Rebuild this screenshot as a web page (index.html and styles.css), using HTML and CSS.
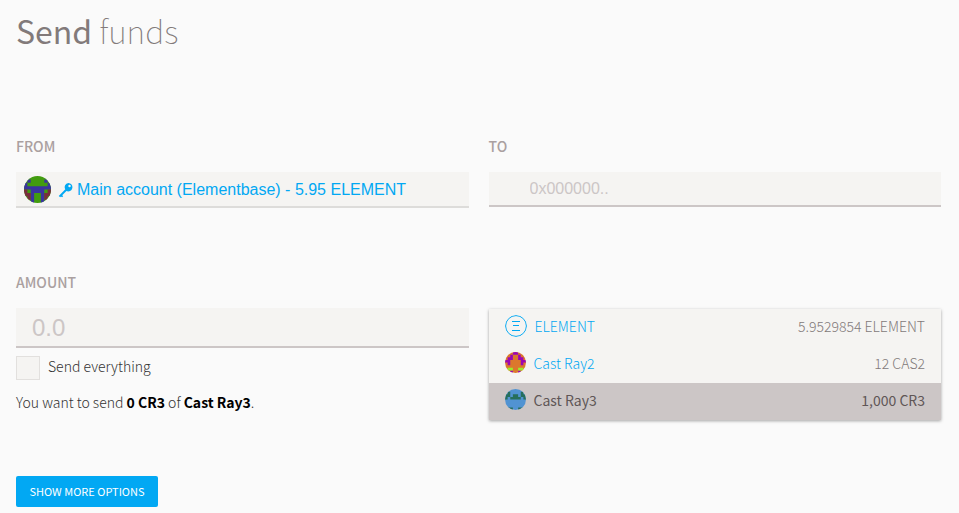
FILE: index.html
```
<!DOCTYPE html>
<html lang="en">
<head>
<meta charset="utf-8">
<title>Send funds</title>
<link rel="stylesheet" href="styles.css">
</head>
<body>
<main class="page">
  <h1 class="title"><strong>Send</strong> funds</h1>
  <form class="form">
    <section class="field">
      <h2 class="label" id="from-label">From</h2>
      <button type="button" class="account" aria-labelledby="from-label from-value">
        <svg class="avatar" viewBox="0 0 8 8" aria-hidden="true">
          <path fill="#429c0f" d="M0 0h8v8H0z"/>
          <path fill="#3a349f" d="M1 1h1v1H1zM6 1h1v1H6zM0 3h8v1H0zM3 4h2v1H3zM0 2h1v1H0zM7 2h1v1H7zM2 5h1v3H2zM5 5h1v3H5zM2 4h4v1H2z"/>
          <path fill="#792d3c" d="M0 4h1v2H0zM7 4h1v2H7zM1 5h1v2H1zM6 5h1v2H6z"/>
        </svg>
        <svg class="key" viewBox="0 0 16 16" aria-hidden="true">
          <path fill="#02a8f3" fill-rule="evenodd" d="M11 .5a4.500 4.500 0 1 1-2 8.600L4.500 13.600l1 1-1.200 1.200-1.100-1-.9 1L.8 14.300l7-7A4.500 4.500 0 0 1 11 .5zM12.300 2.500a1.300 1.300 0 1 0 0 2.600A1.300 1.300 0 0 0 12.300 2.500z"/>
        </svg>
        <span id="from-value">Main account (Elementbase) - 5.95 ELEMENT</span>
      </button>
    </section>
    <section class="field">
      <label class="label" for="to">To</label>
      <input class="input input-to" id="to" type="text" placeholder="0x000000..">
    </section>
    <section class="field">
      <label class="label" for="amount">Amount</label>
      <input class="input input-amount" id="amount" type="text" placeholder="0.0">
      <label class="check"><input class="box" type="checkbox"><span>Send everything</span></label>
      <p class="summary">You want to send <strong>0 CR3</strong> of <strong>Cast Ray3</strong>.</p>
    </section>
    <section class="field tokens-field">
      <ul class="tokens">
        <li><button type="button" class="token">
          <svg class="token-icon ether" viewBox="0 0 22 22" aria-hidden="true" fill="none" stroke="#02a8f3">
            <circle cx="11" cy="11" r="10.400"/>
            <path d="M7 6.500h8M8 10.500h6M7 15.500h8"/>
          </svg>
          <span class="name">ELEMENT</span><span class="balance">5.9529854 ELEMENT</span>
        </button></li>
        <li><button type="button" class="token">
          <svg class="token-icon" viewBox="0 0 8 8" aria-hidden="true">
            <path fill="#db782c" d="M0 0h8v8H0z"/>
            <path fill="#9b07b4" d="M3 0h2v1H3zM2 1h1v2H2zM5 1h1v2H5zM1 2h1v3H1zM6 2h1v3H6zM0 3h1v1H0zM7 3h1v1H7zM2 7h1v1H2zM5 7h1v1H5z"/>
            <path fill="#9bed2d" d="M1 6h2v1H1zM5 6h2v1H5z"/>
          </svg>
          <span class="name">Cast Ray2</span><span class="balance">12 CAS2</span>
        </button></li>
        <li><button type="button" class="token selected" aria-pressed="true">
          <svg class="token-icon" viewBox="0 0 8 8" aria-hidden="true">
            <path fill="#5193d2" d="M0 0h8v8H0z"/>
            <path fill="#266f5c" d="M1 1h1v1H1zM6 1h1v1H6zM0 2h1v2H0zM7 2h1v2H7zM3 2h2v1H3zM1 2h1v1H1zM6 2h1v1H6zM2 3h4v1H2zM1 7h2v1H1zM5 7h2v1H5z"/>
          </svg>
          <span class="name">Cast Ray3</span><span class="balance">1,000 CR3</span>
        </button></li>
      </ul>
    </section>
    <div class="actions"><button type="button" class="more">Show more options</button></div>
  </form>
</main>
</body>
</html>
```
FILE: styles.css
```
* { box-sizing: border-box; }

body {
  margin: 0;
  background: #fafafa;
  color: #333;
  font: 300 14px/24px "Source Sans Pro", "Noto Sans CJK SC", sans-serif;
}

button, input { font: inherit; }

button { cursor: pointer; }

.page { padding: 8px 18px 6px 16px; }

.title {
  margin: 0;
  color: #827a7a;
  font-size: 32px;
  font-weight: 100;
  line-height: 44px;
}

.title strong { font-weight: 400; }

.form {
  display: grid;
  grid-template-columns: 1fr 1fr;
  column-gap: 20px;
  margin-top: 84px;
}

.field { min-width: 0; }

.label {
  display: block;
  margin: 0 0 16px;
  color: #aaa0a0;
  font-size: 14px;
  font-weight: 500;
  line-height: 20px;
  text-transform: uppercase;
}

.account {
  display: flex;
  align-items: center;
  width: 100%;
  height: 36px;
  padding: 1px 8px 0;
  border: 0;
  border-bottom: 2px solid #dddcda;
  background: #f5f4f2;
  color: #02a8f3;
  font: 16px "Liberation Sans", Arial, sans-serif;
}

.avatar {
  width: 27px;
  height: 27px;
  margin-right: 7px;
  border-radius: 50%;
}

.key {
  width: 15px;
  height: 16px;
  margin-right: 4px;
}

.input {
  display: block;
  width: 100%;
  border: 0;
  border-radius: 0;
  border-bottom: 2px solid #ccc6c6;
  background: #f5f4f2;
  font-family: "Liberation Sans", Arial, sans-serif;
  font-weight: 400;
  outline: 0;
}

.input::placeholder { color: #ccc6c6; }

.input-to {
  height: 35px;
  padding: 1px 16px 0 41px;
  font-size: 16px;
}

.input-amount {
  height: 40px;
  padding: 1px 16px 0;
  font-size: 24px;
}

.field:nth-child(n+3) { margin-top: 64px; }

.check {
  display: flex;
  align-items: flex-start;
  gap: 8px;
  margin-top: 8px;
  line-height: 20px;
}

.box {
  width: 24px;
  height: 24px;
  margin: 0;
  border: 1px solid #e2e0de;
  background: #f5f4f2;
  appearance: none;
}

.box:checked { background: #02a8f3; }

.summary { margin: 10px 0 0; }

.summary strong {
  color: #000;
  font-weight: 700;
}

.tokens-field { padding-top: 37px; }

.tokens {
  margin: 0;
  padding: 0;
  list-style: none;
  background: #f5f4f2;
  box-shadow: 0 1px 3px rgba(0, 0, 0, .35);
}

.token {
  display: flex;
  align-items: center;
  gap: 8px;
  width: 100%;
  height: 37px;
  padding: 0 16px 4px;
  border: 0;
  background: none;
  color: #827a7a;
}

.token-icon {
  flex: none;
  width: 21px;
  height: 21px;
  border-radius: 50%;
}

.ether {
  width: 22px;
  height: 22px;
}

.name { color: #02a8f3; }

.balance { margin-left: auto; }

.selected {
  background: #ccc6c6;
  color: #5f5656;
  font-weight: 400;
}

.selected .name { color: inherit; }

.actions { margin-top: 56px; }

.more {
  height: 31px;
  min-width: 142px;
  padding: 0 11px 2px;
  border: 0;
  border-radius: 2px;
  background: #02a8f3;
  color: #fff;
  font-size: 11px;
  font-weight: 400;
  text-transform: uppercase;
}
```
